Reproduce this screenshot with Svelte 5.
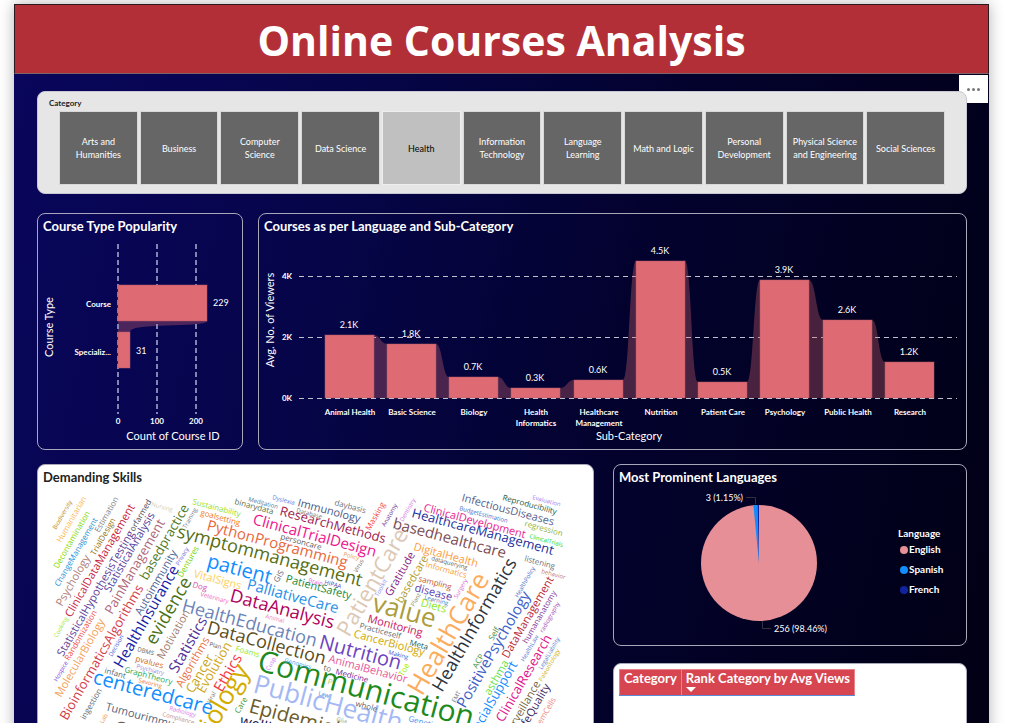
<script>
  const categories = [
    'Arts and Humanities', 'Business', 'Computer Science', 'Data Science', 'Health',
    'Information Technology', 'Language Learning', 'Math and Logic', 'Personal Development',
    'Physical Science and Engineering', 'Social Sciences'
  ];
  let selected = $state('Health');

  const BASE = 398;
  const bars = [
    { x: 325, top: 335, value: '2.1K', label: ['Animal Health'] },
    { x: 387, top: 344, value: '1.8K', label: ['Basic Science'] },
    { x: 449, top: 377, value: '0.7K', label: ['Biology'] },
    { x: 511, top: 388, value: '0.3K', label: ['Health', 'Informatics'] },
    { x: 574, top: 380, value: '0.6K', label: ['Healthcare', 'Management'] },
    { x: 636, top: 261, value: '4.5K', label: ['Nutrition'] },
    { x: 698, top: 382, value: '0.5K', label: ['Patient Care'] },
    { x: 760, top: 280, value: '3.9K', label: ['Psychology'] },
    { x: 823, top: 320, value: '2.6K', label: ['Public Health'] },
    { x: 885, top: 362, value: '1.2K', label: ['Research'] }
  ];
  const BAR_W = 49;
  const ribbons = bars.slice(1).map((b, i) => {
    const a = bars[i];
    const x0 = a.x + BAR_W;
    const mid = (x0 + b.x) / 2;
    return `M${x0} ${a.top}C${mid} ${a.top} ${mid} ${b.top} ${b.x} ${b.top}V${BASE}H${x0}Z`;
  });

  const legend = [
    { name: 'English', color: '#e68f96', y: 551 },
    { name: 'Spanish', color: '#118dff', y: 571 },
    { name: 'French', color: '#12239e', y: 591 }
  ];

  // Words tilted 15 degrees down: text, x, baseline y, size, colour
  const tilted = [
    ['Sustainability', 192, 505, 8, '#98e020'],
    ['goalsetting', 200, 516, 8, '#f07818'],
    ['binarydata', 234, 505, 8, '#5c7048'],
    ['Meditation', 248, 502, 6, '#3a7ca8'],
    ['Dyslexia', 272, 500, 6, '#5a78e8'],
    ['Immunology', 297, 507, 11, '#4a5a86'],
    ['daybasis', 334, 506, 8, '#6c7480'],
    ['Database', 296, 513, 6, '#707070'],
    ['ResearchMethods', 279, 516, 13, '#9c1a50'],
    ['Nursing', 151, 507, 6, '#d0d0b0'],
    ['ClinicalTrialDesign', 252, 525, 15, '#f0148c'],
    ['PythonProgramming', 206, 531, 15, '#e8683c'],
    ['personcare', 280, 540, 8, '#5c5c60'],
    ['Policy', 343, 557, 6, '#e09858'],
    ['symptommanagement', 176, 538, 18, '#566e14'],
    ['patient', 206, 568, 20, '#118dff'],
    ['PatientSafety', 285, 583, 11, '#1a8a3c'],
    ['Brain', 308, 583, 6, '#e860e0'],
    ['HIPAA', 324, 585, 6, '#4848b8'],
    ['VitalSigns', 193, 578, 11, '#fcd058'],
    ['PalliativeCare', 246, 590, 15, '#2a90e8'],
    ['Dog', 192, 588, 8, '#d848a8'],
    ['Veterinary', 200, 597, 6, '#f060b0'],
    ['DataAnalysis', 229, 602, 18, '#b0005c'],
    ['HealthEducation', 181, 612, 18, '#6c84b8'],
    ['Animal', 265, 619, 6, '#f080b0'],
    ['DataCollection', 206, 634, 18, '#5c4c20'],
    ['Nutrition', 318, 649, 20, '#6c44c0'],
    ['Foams', 235, 652, 8, '#90e828'],
    ['Plan', 209, 647, 6, '#585860'],
    ['PublicHealth', 252, 693, 26, '#a4b8f4'],
    ['Communication', 256, 671, 30, '#1c8a1c'],
    ['Genomics', 284, 663, 6, '#3a98f0'],
    ['AnimalBehavior', 328, 663, 11, '#e8589c'],
    ['Medicine', 335, 675, 8, '#7a2490'],
    ['to', 323, 671, 8, '#686868'],
    ['P', 327, 685, 8, '#b8d060'],
    ['Law', 318, 696, 6, '#4878d8'],
    ['Epidemiology', 248, 713, 20, '#6c5c2c'],
    ['wellbeing', 239, 726, 15, '#141850'],
    ['whole', 355, 707, 8, '#606068'],
    ['Monitoring', 367, 623, 11, '#c8145c'],
    ['Practiceself', 359, 629, 8, '#606870'],
    ['CancerBiology', 353, 638, 11, '#d0a800'],
    ['Meta', 409, 646, 8, '#1c5c50'],
    ['Making', 388, 655, 6, '#4060d0'],
    ['value', 371, 612, 26, '#ac9c3c'],
    ['Diets', 420, 607, 11, '#8ce81c'],
    ['Learning', 424, 600, 6, '#3878c0'],
    ['disease', 414, 592, 11, '#6040b0'],
    ['sampling', 418, 582, 8, '#c85418'],
    ['Informatics', 425, 568, 8, '#fc9c38'],
    ['dataquerying', 431, 561, 6, '#606060'],
    ['DigitalHealth', 413, 551, 11, '#fc9c40'],
    ['basedhealthcare', 392, 529, 15, '#7c4c54'],
    ['HealthcareManagement', 411, 518, 13, '#1c309c'],
    ['ClinicalDevelopment', 423, 512, 11, '#e81c90'],
    ['BudgetEstimation', 459, 511, 6, '#4068c8'],
    ['InfectiousDiseases', 461, 502, 11, '#56648c'],
    ['Reproducibility', 502, 501, 8, '#1c5844'],
    ['Evaluation', 532, 500, 6, '#9c80f0'],
    ['regression', 524, 527, 8, '#8cb038'],
    ['ClinicalTrials', 529, 539, 6, '#10d810'],
    ['listening', 524, 562, 8, '#687078'],
    ['behavior', 541, 574, 6, '#c87868'],
    ['infant', 104, 674, 8, '#606870'],
    ['centeredcare', 92, 684, 20, '#118dff'],
    ['GraphTheory', 124, 673, 8, '#1ca850'],
    ['Savoring', 138, 683, 6, '#f08020'],
    ['Psychiatry', 136, 669, 6, '#a088d8'],
    ['pvalues', 135, 662, 8, '#d06418'],
    ['DBMS', 137, 652, 6, '#585858'],
    ['Radiology', 169, 711, 6, '#d878e8'],
    ['Compliance', 162, 717, 6, '#b88c8c'],
    ['Tumourimmunology', 105, 711, 11, '#56647c'],
    ['Genetics', 408, 722, 8, '#3c90f0'],
    ['Oncology', 112, 735, 20, '#6c6058'],
    ['Glia', 336, 722, 6, '#90a070']
  ];

  // Words running 60 degrees upwards
  const rising = [
    ['Biodiversity', 56, 531, 6, '#b88c10'],
    ['Humanitarian', 61, 544, 8, '#fcb858'],
    ['Decontamination', 58, 570, 8, '#80d800'],
    ['ChangeManagement', 59, 588, 8, '#1c90d8'],
    ['TrialDesign', 95, 557, 8, '#907010'],
    ['Estimation', 99, 534, 8, '#808088'],
    ['orfarmed', 134, 533, 8, '#484850'],
    ['Psychology', 62, 608, 11, '#b08078'],
    ['ClinicalDataManagement', 71, 619, 11, '#c8203c'],
    ['StatisticalAnalysis', 110, 594, 11, '#50409c'],
    ['StatisticalHypothesisTesting', 63, 658, 11, '#5c3c98'],
    ['PainManagement', 112, 616, 13, '#b0687c'],
    ['basedpractice', 147, 582, 13, '#50781c'],
    ['Training', 186, 530, 6, '#787880'],
    ['Autoimmunity', 141, 617, 11, '#4c6494'],
    ['Privacy', 179, 567, 6, '#6868d8'],
    ['Dentures', 182, 579, 8, '#74d400'],
    ['HealthInsurance', 122, 670, 15, '#1420a8'],
    ['evidence', 155, 647, 18, '#4c7014'],
    ['Motivation', 163, 661, 11, '#a07c70'],
    ['Statistics', 177, 675, 15, '#54309c'],
    ['Cooking', 57, 639, 6, '#98e83c'],
    ['Randomization', 69, 662, 8, '#f04848'],
    ['MolecularBiology', 61, 699, 11, '#f4a058'],
    ['BioinformaticsAlgorithms', 67, 722, 13, '#d43c48'],
    ['Hospice', 57, 683, 6, '#7844e0'],
    ['Decision', 112, 658, 6, '#3c58d8'],
    ['ingestion', 85, 721, 8, '#5c686c'],
    ['Algorithms', 182, 689, 11, '#e87044'],
    ['Cancer', 193, 695, 13, '#c8a414'],
    ['Evolution', 204, 695, 13, '#d0a81c'],
    ['Ethics', 222, 694, 15, '#f83840'],
    ['Viral', 210, 705, 6, '#707070'],
    ['Biology', 206, 748, 26, '#d4ac00'],
    ['Care', 239, 715, 8, '#38983c'],
    ['Cusp', 269, 672, 6, '#c878f0'],
    ['GIS', 278, 584, 8, '#606068'],
    ['Virus', 357, 574, 6, '#686868'],
    ['Masking', 370, 532, 8, '#f44848'],
    ['Anatomy', 385, 528, 6, '#6c3494'],
    ['Dentistry', 403, 523, 6, '#d078e0'],
    ['PatientCare', 349, 639, 22, '#dcc8b4'],
    ['Toolkit', 378, 598, 6, '#8c8ce8'],
    ['Gratitude', 391, 598, 11, '#841c84'],
    ['basedcare', 402, 605, 11, '#b09c28'],
    ['Surgery', 457, 600, 6, '#d870d0'],
    ['Plant', 414, 608, 6, '#7c8c60'],
    ['Toe', 403, 678, 8, '#98f000'],
    ['HealthCare', 422, 698, 26, '#fcac5c'],
    ['HealthInformatics', 442, 694, 18, '#2c3440'],
    ['Self', 493, 642, 8, '#3c8c3c'],
    ['ACP', 477, 670, 8, '#3c8c3c'],
    ['EMT', 455, 704, 6, '#707070'],
    ['PositivePsychology', 465, 710, 15, '#3c60c8'],
    ['asthma', 490, 697, 11, '#64e048'],
    ['SocialSupport', 476, 738, 13, '#118dff'],
    ['Surveillance', 510, 738, 11, '#746440'],
    ['DataManagement', 508, 660, 11, '#b82430'],
    ['HealthPolicy', 518, 599, 6, '#4068c8'],
    ['humananatomy', 527, 645, 8, '#7c3498'],
    ['radiography', 543, 634, 6, '#a050b0'],
    ['HealthLaw', 524, 663, 6, '#5470d0'],
    ['LegalLiability', 542, 671, 6, '#5878c8'],
    ['Paleontology', 542, 683, 6, '#d0b020'],
    ['ClinicalResearch', 503, 724, 13, '#e4108c'],
    ['LifeQuality', 523, 735, 11, '#3c2860'],
    ['StemCells', 538, 732, 8, '#f08c88'],
    ['Lab', 103, 725, 6, '#f09040']
  ];
</script>

<div class="viewport">
  <main class="report">
    <header><h1>Online Courses Analysis</h1></header>
    <button class="more" aria-label="More options"><i></i><i></i><i></i></button>

    <div class="body">
      <section class="slicer">
        <h2>Category</h2>
        <div class="tiles">
          {#each categories as c}
            <button class="tile" class:active={c === selected} aria-pressed={c === selected} onclick={() => (selected = c)}>{c}</button>
          {/each}
        </div>
      </section>

      <div class="row charts">
        <section class="panel">
          <h2>Course Type Popularity</h2>
          <svg viewBox="38 238 204 211">
            <path class="ribbon" d="M118 321H207C207 328 130 322 130 332H118Z" />
            <path class="vgrid" d="M118 244V414M157 244V414M196 244V414" />
            <rect class="bar" x="118" y="285" width="89" height="36" />
            <rect class="bar" x="118" y="332" width="12" height="36" />
            <text class="tick end" x="111" y="307">Course</text>
            <text class="tick end" x="111" y="355">Specializ...</text>
            <text class="val" x="213" y="306">229</text>
            <text class="val" x="136" y="354">31</text>
            <text class="tick mid" x="118" y="424">0</text>
            <text class="tick mid" x="157" y="424">100</text>
            <text class="tick mid" x="196" y="424">200</text>
            <text class="axis mid" x="173" y="440">Count of Course ID</text>
            <text class="axis mid" transform="translate(53 327) rotate(-90)">Course Type</text>
          </svg>
        </section>

        <section class="panel">
          <h2>Courses as per Language and Sub-Category</h2>
          <svg viewBox="259 238 707 211">
            <path class="hgrid" d="M299 276.5H957M299 337.5H957" />
            {#each ribbons as d}<path class="ribbon" {d} />{/each}
            {#each bars as b}
              <rect class="bar" x={b.x} y={b.top} width={BAR_W} height={BASE - b.top} />
              <text class="val mid" x={b.x + 24} y={b.top - 7}>{b.value}</text>
              {#each b.label as line, i}
                <text class="tick mid" x={b.x + 25} y={415 + i * 11}>{line}</text>
              {/each}
            {/each}
            <path class="hgrid" d="M299 398.5H957" />
            <text class="tick end" x="292" y="279">4K</text>
            <text class="tick end" x="292" y="340">2K</text>
            <text class="tick end" x="292" y="401">0K</text>
            <text class="axis mid" x="629" y="440">Sub-Category</text>
            <text class="axis mid" transform="translate(274 320) rotate(-90)">Avg. No. of Viewers</text>
          </svg>
        </section>
      </div>

      <div class="row lower">
        <section class="panel white">
          <h2>Demanding Skills</h2>
          <svg class="cloud" viewBox="38 490 555 270">
            {#each tilted as [word, x, y, size, color]}
              <text transform="translate({x} {y}) rotate(15)" font-size={size} fill={color}>{word}</text>
            {/each}
            {#each rising as [word, x, y, size, color]}
              <text transform="translate({x} {y}) rotate(-60)" font-size={size} fill={color}>{word}</text>
            {/each}
          </svg>
        </section>

        <div class="side">
          <section class="panel">
            <h2>Most Prominent Languages</h2>
            <svg viewBox="614 490 352 156">
              <circle cx="759" cy="564" r="58" fill="#e68f96" />
              <path d="M759 564L753.4 506.3A58 58 0 0 1 757.6 506Z" fill="#118dff" />
              <path d="M759 564L757.6 506A58 58 0 0 1 759 506Z" fill="#12239e" />
              <path class="leader" d="M746 498.500H755.500V505M762.500 622V629.500H771" />
              <text class="val end" x="743" y="502">3 (1.15%)</text>
              <text class="val" x="774" y="633">256 (98.46%)</text>
              <text class="legend" x="898" y="538">Language</text>
              {#each legend as l}
                <circle cx="904" cy={l.y} r="4" fill={l.color} />
                <text class="legend" x="909" y={l.y + 3}>{l.name}</text>
              {/each}
            </svg>
          </section>

          <section class="panel white ranking">
            <table>
              <thead>
                <tr>
                  <th>Category</th>
                  <th>Rank Category by Avg Views
                    <svg class="sort" viewBox="0 0 10 5"><path d="M0 0H10L5 5Z" fill="#fff" /></svg>
                  </th>
                </tr>
              </thead>
            </table>
          </section>
        </div>
      </div>
    </div>
  </main>
</div>

<style>
  .viewport {
    height: 100vh;
    overflow: hidden;
    background: #fff;
    font-family: Lato, 'Open Sans', sans-serif;
  }
  .report {
    position: relative;
    margin: 4px 21px 0 14px;
    min-height: 100vh;
    background: linear-gradient(103deg, #09065c 0%, #06054a 30%, #03022e 60%, #010014 100%);
    box-shadow: 0 0 14px rgba(0, 0, 0, 0.3);
  }
  header {
    box-sizing: border-box;
    height: 70px;
    padding-top: 2px;
    background: #b32f37;
    border: 1px solid #2a1a20;
    border-bottom-color: #7c6468;
    display: flex;
    align-items: center;
    justify-content: center;
  }
  h1 {
    margin: 0;
    color: #fff;
    font: bold 41px/56px 'Open Sans', sans-serif;
  }
  .more {
    position: absolute;
    top: 71px;
    right: 1px;
    width: 29px;
    height: 28px;
    padding: 0;
    border: 0;
    background: #fff;
    display: flex;
    align-items: center;
    justify-content: center;
    gap: 2px;
  }
  .more i {
    width: 3px;
    height: 3px;
    border-radius: 50%;
    background: #777;
  }
  .body {
    padding: 17px 22px 0 23px;
    display: flex;
    flex-direction: column;
  }
  .slicer {
    position: relative;
    box-sizing: border-box;
    height: 103px;
    padding: 5px 21px 8px 21px;
    border: 1px solid #c8c8d4;
    border-radius: 8px;
    background: #e6e6e6;
    display: flex;
    flex-direction: column;
  }
  .slicer h2 {
    margin: 0 0 1px -10px;
    color: #222;
    font: bold 8px/13px Lato, sans-serif;
  }
  .tiles {
    flex: 1;
    display: grid;
    grid-template-columns: repeat(11, 1fr);
    gap: 2px;
  }
  .tile {
    min-width: 0;
    padding: 0 4px;
    border: 1px solid #999;
    outline: 1px solid #d8d8d8;
    outline-offset: -1px;
    background: #666;
    color: #fff;
    font: 9px/13px Lato, sans-serif;
  }
  .tile.active {
    background: #c0c0c0;
    color: #000;
    outline-color: #eee;
  }
  .row {
    display: grid;
  }
  .charts {
    margin-top: 19px;
    grid-template-columns: 206fr 709fr;
    gap: 15px;
  }
  .lower {
    margin-top: 14px;
    grid-template-columns: 557fr 354fr;
    gap: 19px;
  }
  .panel {
    border: 1px solid #a8a8b8;
    border-radius: 8px;
    min-width: 0;
    overflow: hidden;
  }
  .panel.white {
    background: #fff;
  }
  .panel h2 {
    margin: 0;
    padding: 0 5px;
    color: #fff;
    font: bold 13px/24px Lato, sans-serif;
  }
  .panel.white h2 {
    color: #222;
  }
  .panel svg {
    display: block;
    width: 100%;
  }
  .side {
    display: flex;
    flex-direction: column;
    gap: 17px;
  }
  .ranking {
    flex: 1;
    padding: 5px;
  }
  .cloud text {
    font-family: 'Open Sans', 'Noto Sans', sans-serif;
  }
  .tick,
  .val,
  .axis,
  .legend {
    fill: #fff;
    font-family: Lato, sans-serif;
  }
  .tick {
    font-size: 8px;
    font-weight: bold;
  }
  .val {
    font-size: 9px;
  }
  .axis {
    font-size: 11px;
  }
  .legend {
    font-size: 10px;
    font-weight: bold;
  }
  .mid {
    text-anchor: middle;
  }
  .end {
    text-anchor: end;
  }
  .bar {
    fill: #de6a73;
    stroke: #b4586a;
    stroke-width: 1;
    stroke-opacity: 0.5;
  }
  .ribbon {
    fill: #de6a73;
    fill-opacity: 0.32;
  }
  .vgrid {
    fill: none;
    stroke: #8484b0;
    stroke-width: 2;
    stroke-dasharray: 5 3;
  }
  .hgrid {
    fill: none;
    stroke: #c0c0cc;
    stroke-width: 1;
    stroke-dasharray: 5 4;
  }
  .leader {
    fill: none;
    stroke: #33313f;
  }
  table {
    border-collapse: collapse;
    background: #d64550;
    color: #fff;
  }
  th {
    padding: 0 4px;
    border: 1px solid #e8858c;
    border-bottom: 1px solid #5a8ad8;
    font: bold 13px/17px Lato, sans-serif;
    text-align: left;
    vertical-align: top;
  }
  .panel th .sort {
    width: 10px;
    height: 5px;
    margin-bottom: 3px;
  }
</style>
